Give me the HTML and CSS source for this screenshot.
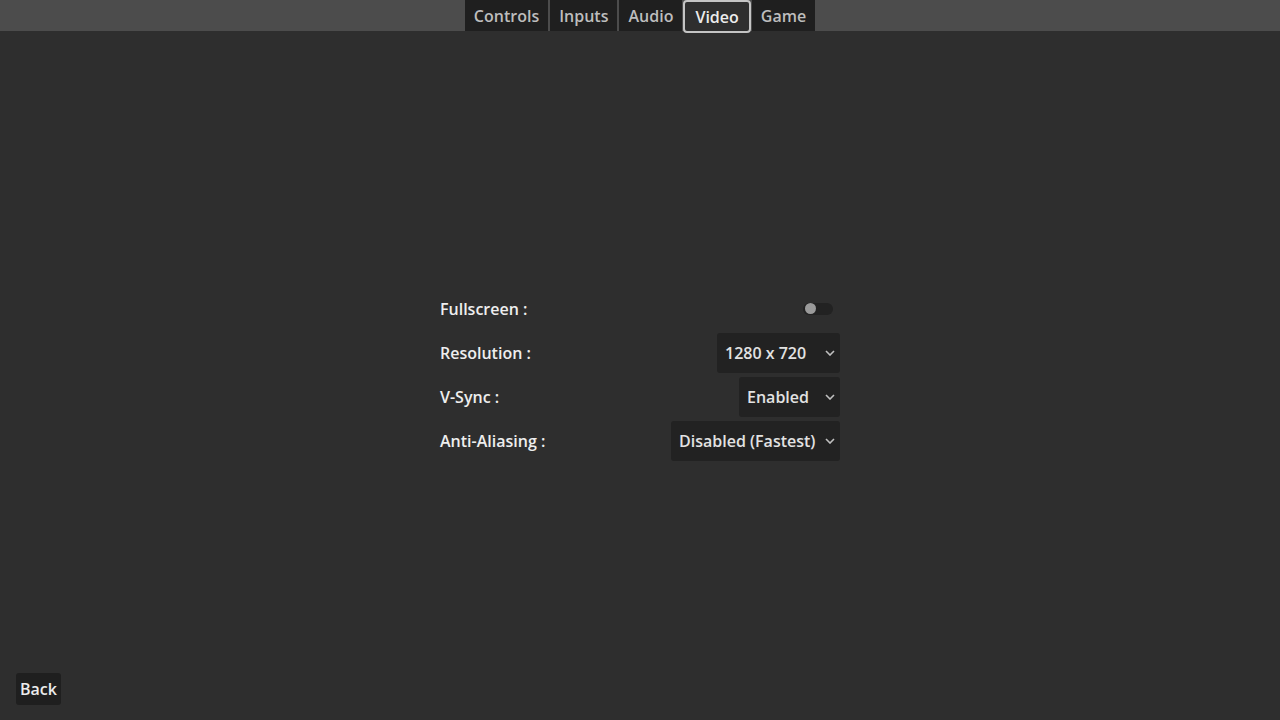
FILE: index.html
```html
<!DOCTYPE html>
<html lang="en">
<head>
    <meta charset="UTF-8">
    <meta name="viewport" content="width=device-width, initial-scale=1.0">
    <title>Settings</title>
    <link rel="stylesheet" href="styles.css">
</head>
<body>
    <div class="tabs">
        <div class="tab">Controls</div>
        <div class="tab">Inputs</div>
        <div class="tab">Audio</div>
        <div class="tab active">Video</div>
        <div class="tab">Game</div>
    </div>
    <div class="panel">
        <div class="settings">
            <div class="row">
                <span class="label">Fullscreen :</span>
                <div class="toggle"><div class="knob"></div></div>
            </div>
            <div class="row">
                <span class="label">Resolution :</span>
                <div class="dropdown dd-resolution">
                    <span>1280 x 720</span>
                    <svg class="chevron" width="10" height="6" viewBox="0 0 10 6"><path d="M1 1 L5 5 L9 1" fill="none" stroke="#c0c0c0" stroke-width="1.6"/></svg>
                </div>
            </div>
            <div class="row">
                <span class="label">V-Sync :</span>
                <div class="dropdown dd-vsync">
                    <span>Enabled</span>
                    <svg class="chevron" width="10" height="6" viewBox="0 0 10 6"><path d="M1 1 L5 5 L9 1" fill="none" stroke="#c0c0c0" stroke-width="1.6"/></svg>
                </div>
            </div>
            <div class="row">
                <span class="label">Anti-Aliasing :</span>
                <div class="dropdown dd-aa">
                    <span>Disabled (Fastest)</span>
                    <svg class="chevron" width="10" height="6" viewBox="0 0 10 6"><path d="M1 1 L5 5 L9 1" fill="none" stroke="#c0c0c0" stroke-width="1.6"/></svg>
                </div>
            </div>
        </div>
        <div class="footer">
            <button class="back">Back</button>
        </div>
    </div>
</body>
</html>
```

FILE: styles.css
```css
html, body {
    height: 100%;
}
body {
    margin: 0;
    background: #4c4c4c;
    font-family: 'Open Sans', 'Noto Sans', sans-serif;
    font-weight: 600;
    font-size: 16px;
    display: flex;
    flex-direction: column;
    overflow: hidden;
}
.tabs {
    display: flex;
    justify-content: center;
    gap: 2px;
    height: 31px;
    background: #4c4c4c;
}
.tab {
    background: #1f1f1f;
    color: #bdbdbd;
    padding: 1px 9px 0;
    line-height: 30px;
    height: 30px;
}
.tab.active {
    position: relative;
    z-index: 1;
    background: #2e2e2e;
    color: #ececec;
    border: 2px solid #c4c4c4;
    border-radius: 4px;
    padding: 1px 10px 0;
    line-height: 28px;
    height: 28px;
    margin: 0 -1px;
}
.panel {
    flex: 1;
    background: #2e2e2e;
    display: grid;
    grid-template-rows: 1fr auto 1fr;
    justify-items: center;
}
.settings {
    grid-row: 2;
    width: 400px;
    display: flex;
    flex-direction: column;
    gap: 4px;
    margin-bottom: 2px;
}
.row {
    height: 40px;
    display: flex;
    align-items: center;
    justify-content: space-between;
}
.label {
    color: #eeeeee;
}
.toggle {
    width: 30px;
    height: 12px;
    border-radius: 6px;
    background: #222222;
    margin-right: 7px;
    display: flex;
    align-items: center;
    padding-left: 2px;
    box-sizing: border-box;
}
.knob {
    width: 11px;
    height: 11px;
    border-radius: 50%;
    background: #9a9a9a;
}
.dropdown {
    height: 40px;
    box-sizing: border-box;
    background: #222222;
    border-radius: 3px;
    color: #e2e2e2;
    display: flex;
    align-items: center;
    justify-content: space-between;
    padding: 0 5px 0 8px;
}
.dd-resolution {
    width: 123px;
}
.dd-vsync {
    width: 101px;
}
.dd-aa {
    width: 169px;
}
.chevron {
    display: block;
}
.footer {
    grid-row: 3;
    justify-self: start;
    align-self: end;
    padding: 0 0 15px 16px;
}
.back {
    font-family: inherit;
    font-weight: 600;
    font-size: 16px;
    color: #ececec;
    background: #1f1f1f;
    border: none;
    border-radius: 3px;
    height: 32px;
    padding: 0 4px;
    cursor: pointer;
}
```
